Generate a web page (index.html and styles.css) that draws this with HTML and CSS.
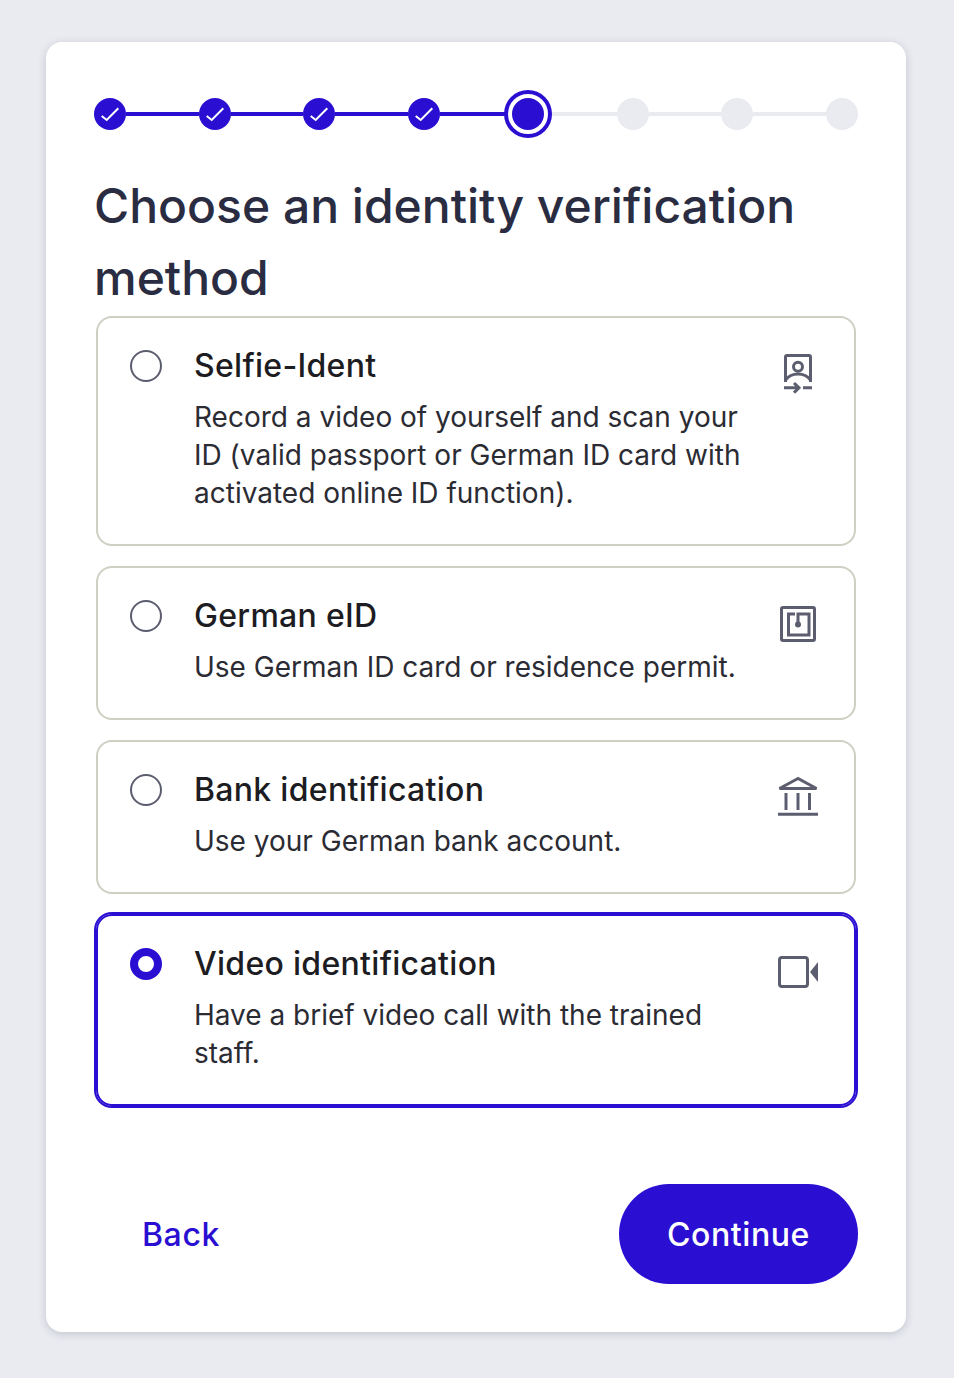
FILE: index.html
```html
<!DOCTYPE html>
<html lang="en">
<head>
  <meta charset="UTF-8" />
  <meta name="viewport" content="width=device-width, initial-scale=1.0"/>
  <title>Choose an identity verification method</title>
  <link rel="stylesheet" href="styles.css">
</head>
<body>
  <main class="card">
    <!-- Steps -->
    <div class="stepper">
      <span class="step done"><svg viewBox="0 0 32 32"><path d="M7.7 18l5 4L24.3 10.300"/></svg></span>
      <span class="link done"></span>
      <span class="step done"><svg viewBox="0 0 32 32"><path d="M7.7 18l5 4L24.3 10.300"/></svg></span>
      <span class="link done"></span>
      <span class="step done"><svg viewBox="0 0 32 32"><path d="M7.7 18l5 4L24.3 10.300"/></svg></span>
      <span class="link done"></span>
      <span class="step done"><svg viewBox="0 0 32 32"><path d="M7.7 18l5 4L24.3 10.300"/></svg></span>
      <span class="link done"></span>
      <span class="step current"></span>
      <span class="link"></span>
      <span class="step"></span>
      <span class="link"></span>
      <span class="step"></span>
      <span class="link"></span>
      <span class="step"></span>
    </div>

    <h1 class="page-title">Choose an identity verification method</h1>

    <div class="options">
      <label class="option">
        <span class="radio"></span>
        <span class="option-text">
          <span class="option-title">Selfie-Ident</span>
          <span class="option-desc">Record a video of yourself and scan your ID (valid passport or German ID card with activated online ID function).</span>
        </span>
        <svg class="option-icon" viewBox="0 0 48 48">
          <path d="M11.500 32V7a1.500 1.500 0 0 1 1.500-1.500h22a1.500 1.500 0 0 1 1.500 1.500v25"/>
          <circle cx="24" cy="16.700" r="4.500"/>
          <path d="M11.500 30c3-4 7.500-6 12.500-6s9.500 2 12.500 6"/>
          <path d="M10 37.800h15M20 33l5 4.800-5 4.800M29 37.800h9"/>
        </svg>
      </label>

      <label class="option">
        <span class="radio"></span>
        <span class="option-text">
          <span class="option-title">German eID</span>
          <span class="option-desc">Use German ID card or residence permit.</span>
        </span>
        <svg class="option-icon" viewBox="0 0 48 48">
          <rect x="7.500" y="7.500" width="33" height="33" rx="1.500"/>
          <path d="M21 14H14.500V35H35V14H24V24"/>
          <circle class="solid" cx="24" cy="24.500" r="3"/>
        </svg>
      </label>

      <label class="option">
        <span class="radio"></span>
        <span class="option-text">
          <span class="option-title">Bank identification</span>
          <span class="option-desc">Use your German bank account.</span>
        </span>
        <svg class="option-icon" viewBox="0 0 48 48">
          <path d="M24 4.500L5.500 14.500H42.500Z"/>
          <path d="M12 19V36M24 19V36M35.500 19V36"/>
          <path d="M4 40.300H44"/>
        </svg>
      </label>

      <label class="option selected">
        <span class="radio"></span>
        <span class="option-text">
          <span class="option-title">Video identification</span>
          <span class="option-desc">Have a brief video call with the trained staff.</span>
        </span>
        <svg class="option-icon" viewBox="0 0 48 48">
          <rect x="5.500" y="9.500" width="28" height="29" rx="2.500"/>
          <path class="solid" d="M36 24L44 14V34Z"/>
        </svg>
      </label>
    </div>

    <div class="actions">
      <button class="btn-back">Back</button>
      <button class="btn-next">Continue</button>
    </div>
  </main>
</body>
</html>
```

FILE: styles.css
```css
body {
  background: #e9ebf0;
  margin: 0;
  font-family: Inter, 'Liberation Sans', sans-serif;
}
.card {
  width: 764px;
  margin: 42px 0 46px 46px;
  background: #fff;
  border-radius: 16px;
  box-shadow: 0 2px 8px rgba(30, 32, 60, 0.18);
  padding: 48px;
}
.stepper {
  display: flex;
  align-items: center;
  height: 48px;
}
.step {
  flex: none;
  width: 32px;
  height: 32px;
  border-radius: 50%;
  background: #e9ebf0;
}
.step svg {
  display: block;
  width: 32px;
  height: 32px;
  fill: none;
  stroke: #fff;
  stroke-width: 2;
}
.step.done {
  background: #2a0fd2;
}
.step.current {
  width: 32px;
  height: 32px;
  margin: 0 -4px;
  background: #2a0fd2;
  border: 4px solid #fff;
  box-shadow: 0 0 0 4px #2a0fd2;
  box-sizing: content-box;
  position: relative;
}
.link {
  flex: 1 1 0;
  height: 4px;
  background: #e9ebf0;
}
.link.done {
  background: #2a0fd2;
}
.page-title {
  font-size: 48px;
  line-height: 72px;
  font-weight: 500;
  color: #2a2c42;
  margin: 32px 0 2px 0;
}
.options {
  display: flex;
  flex-direction: column;
  gap: 20px;
  margin: 0 2px;
}
.option {
  display: flex;
  align-items: flex-start;
  border: 2px solid #cfcfc4;
  border-radius: 16px;
  padding: 24px 36px 32px 32px;
  cursor: pointer;
}
.option.selected {
  border-color: #2a0fd2;
  box-shadow: 0 0 0 2px #2a0fd2;
}
.radio {
  flex: none;
  box-sizing: border-box;
  width: 32px;
  height: 32px;
  margin: 8px 32px 0 0;
  border: 2px solid #5c5e70;
  border-radius: 50%;
}
.selected .radio {
  border: 8px solid #2a0fd2;
}
.option-text {
  flex: 1 1 0;
  padding-right: 24px;
}
.option-title {
  display: block;
  font-size: 32px;
  line-height: 48px;
  font-weight: 500;
  color: #1c1c22;
  letter-spacing: 0.3px;
  margin-bottom: 8px;
}
.option-desc {
  display: block;
  font-size: 28px;
  line-height: 38px;
  color: #2b2b33;
}
.option-icon {
  flex: none;
  width: 48px;
  height: 48px;
  margin-top: 8px;
  margin-right: -4px;
  fill: none;
  stroke: #5c5e70;
  stroke-width: 3;
}
.option-icon .solid {
  fill: #5c5e70;
  stroke: none;
}
.actions {
  display: flex;
  justify-content: space-between;
  align-items: center;
  margin-top: 78px;
}
.btn-back,
.btn-next {
  height: 100px;
  padding: 0 48px;
  border: none;
  border-radius: 50px;
  font-family: inherit;
  font-size: 32px;
  font-weight: 500;
  letter-spacing: 0.6px;
  cursor: pointer;
}
.btn-back {
  background: none;
  color: #2a0fd2;
}
.btn-next {
  background: #2a0fd2;
  color: #fff;
}
```
